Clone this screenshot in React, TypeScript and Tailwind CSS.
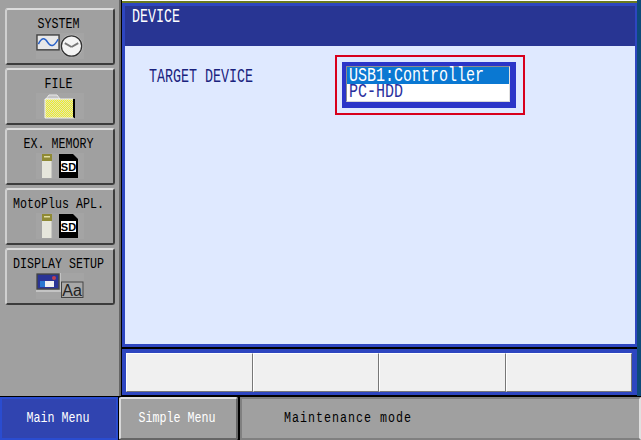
import React from "react";

const mono = "font-['Liberation_Mono',monospace]";

const bevel =
  "border-2 border-t-[#dcdcdc] border-l-[#d0d0d0] border-r-[#3c3c3c] border-b-[#3c3c3c] rounded-[3px]";

function SystemIcon() {
  return (
    <svg width="50" height="26" viewBox="0 0 50 26">
      <rect x="1" y="1.5" width="23" height="15.5" fill="#e8e8e8" stroke="#444" strokeWidth="1.5" />
      <path d="M2.5 11 C6 4 9 4 12 9 S19 14 23 6" fill="none" stroke="#2a62c8" strokeWidth="1.6" />
      <circle cx="37" cy="13" r="11.8" fill="#d0d0d0" />
      <circle cx="37" cy="13" r="10.6" fill="#f4f4f4" stroke="#333" strokeWidth="1.4" />
      <path d="M37 14 L30 10 M37 14 L44 10" stroke="#777" strokeWidth="2" />
    </svg>
  );
}

function FolderIcon() {
  return (
    <svg width="32" height="25" viewBox="0 0 32 25">
      <defs>
        <pattern id="dither" width="2" height="2" patternUnits="userSpaceOnUse">
          <rect width="2" height="2" fill="#f2f220" />
          <rect width="1" height="1" fill="#e0e0c0" />
          <rect x="1" y="1" width="1" height="1" fill="#e0e0c0" />
        </pattern>
      </defs>
      <path d="M2 5 L5 1 H13 L16 5 Z" fill="#c4c4c4" stroke="#e8e8e8" strokeWidth="1" />
      <rect x="1" y="5" width="28" height="19" fill="url(#dither)" />
      <path d="M1 24 V5 H29" fill="none" stroke="#f4f4f4" strokeWidth="1" />
      <path d="M30 5 V24" stroke="#000" strokeWidth="2" />
      <path d="M1 24 H30" stroke="#eee" strokeWidth="1" />
    </svg>
  );
}

function MemoryIcon() {
  return (
    <svg width="36" height="24" viewBox="0 0 36 24">
      <rect x="0" y="0" width="10" height="7" fill="#8f8a35" />
      <rect x="2" y="2" width="6" height="1.5" fill="#e0dca0" />
      <rect x="0" y="7" width="10" height="17" fill="#e6e6dc" />
      <path d="M10 7 V24" stroke="#aaa" strokeWidth="1" />
      <path d="M17 0 H31 L36 5 V24 H17 Z" fill="#000" />
      <rect x="19" y="7" width="15" height="11" fill="#fff" />
      <text x="26.5" y="16.5" textAnchor="middle" fontSize="11" fontWeight="700" fontFamily="Liberation Sans, sans-serif" fill="#000">SD</text>
    </svg>
  );
}

function DisplayIcon() {
  return (
    <svg width="48" height="26" viewBox="0 0 48 26">
      <rect x="0" y="0" width="25" height="19" fill="#c4c4c4" />
      <rect x="1" y="1" width="22" height="15" fill="#2a3496" stroke="#444" strokeWidth="1.5" />
      <rect x="4" y="8" width="14" height="6" fill="#f0f0f0" />
      <rect x="4" y="8" width="5" height="6" fill="#2a78d0" />
      <circle cx="18" cy="5" r="2" fill="#c04050" />
      <rect x="25.5" y="9" width="21.5" height="15.5" fill="#a8a8a8" stroke="#444" strokeWidth="1" />
      <text x="36" y="22.5" textAnchor="middle" fontSize="16" fontFamily="Liberation Sans, sans-serif" fill="#222">Aa</text>
    </svg>
  );
}

function Tall({ children, className = "" }: { children: React.ReactNode; className?: string }) {
  return <span className={`inline-block whitespace-pre ${className}`}>{children}</span>;
}

function MenuButton({ label, children }: { label: string; children: React.ReactNode }) {
  return (
    <div className={`h-[57px] flex flex-col items-center ${bevel}`}>
      <span className="mt-[7px] pr-[3px] h-[15px] text-[11.67px] leading-[15px] text-black">
        <Tall className="scale-y-[1.3]">{label}</Tall>
      </span>
      <div className="mt-[1px] h-[26px] w-[48px] bg-[#a4a4a4] flex items-center justify-center">{children}</div>
    </div>
  );
}

export default function App() {
  return (
    <div className={`w-[641px] h-[440px] flex flex-col bg-black overflow-hidden ${mono}`}>
      <div className="h-[396px] flex shrink-0">
        {/* left menu */}
        <div className="w-[122px] shrink-0 flex bg-black pr-px">
          <div className="flex-1 bg-[#a0a0a0] border-r-2 border-[#666] pl-[5px] pr-[4px] pt-[8px] flex flex-col gap-[3px]">
            <MenuButton label="SYSTEM"><SystemIcon /></MenuButton>
            <MenuButton label="FILE"><FolderIcon /></MenuButton>
            <MenuButton label="EX. MEMORY"><MemoryIcon /></MenuButton>
            <MenuButton label="MotoPlus APL."><MemoryIcon /></MenuButton>
            <MenuButton label="DISPLAY SETUP"><DisplayIcon /></MenuButton>
          </div>
        </div>

        <div className="w-[515px] shrink-0 flex flex-col">
          <div className="h-[3px] bg-[#6b7a1e] border-t border-white" />

          {/* content panel */}
          <div className="h-[344px] border-[3px] border-r-2 border-[#2e46c0] flex flex-col bg-[#dfe9ff]">
            <div className="h-[40px] bg-[#283593] text-white text-[13.33px] leading-[24px] pl-[7px]">
              <Tall className="scale-y-[1.45]">DEVICE</Tall>
            </div>
            <div className="flex-1 flex items-start pt-[9px] pl-[24px]">
              <div className="w-[186px] pt-[13px] text-[13.33px] leading-[20px] text-[#1a237e]">
                <Tall className="scale-y-[1.45]">TARGET DEVICE</Tall>
              </div>
              <div className="w-[190px] h-[60px] border-2 border-[#d8001c] pl-[5px] pt-[5px]">
                <div className="w-[174px] h-[46px] bg-[#2b35c8] pl-[4px] pt-[4px]">
                  <div className="w-[164px] h-[36px] bg-white border border-[#8c8c8c] border-r-[#e0e0e0] border-b-[#d8d8d8] text-[15px] leading-[13px]">
                    <div className="bg-[#0a78d2] text-white h-[17px] pl-[2px] pt-[3px]">
                      <Tall className="scale-y-[1.3]">USB1:Controller</Tall>
                    </div>
                    <div className="text-[#2a2f9e] pl-[2px] pt-[2px]">
                      <Tall className="scale-y-[1.3]">PC-HDD</Tall>
                    </div>
                  </div>
                </div>
              </div>
            </div>
          </div>

          {/* function keys */}
          <div className="h-[46px] mt-[2px] bg-[#2e46c0] pl-[4px] pr-[5px] pt-[4px] pb-[3px] flex">
            {[0, 1, 2, 3].map((i) => (
              <div key={i} className="flex-1 bg-[#f0f0f0] border border-t-white border-l-white border-r-[#777] border-b-[#777]" />
            ))}
          </div>
        </div>

        <div className="flex-1 bg-[#0d4a7a]" />
      </div>

      {/* status row */}
      <div className="flex-1 flex pt-px">
        <div className="w-[118px] bg-[#3044b0] border-2 border-[#2a4cd0] text-white text-[11.67px] pr-[2px] flex items-center justify-center">
          <Tall className="scale-y-[1.3]">Main Menu</Tall>
        </div>
        <div className="w-[119px] ml-px bg-[#a0a0a0] border-2 border-t-[#e0e0e0] border-l-[#d8d8d8] border-r-[#666] border-b-[#666] rounded-[2px] text-white text-[11.67px] pr-[3px] flex items-center justify-center">
          <Tall className="scale-y-[1.3]">Simple Menu</Tall>
        </div>
        <div className="flex-1 ml-[2px] bg-[#a0a0a0] border-2 border-t-[#808080] border-l-[#808080] border-r-[#e0e0e0] border-b-[#808080] text-black text-[11.67px] tracking-[1px] flex items-center pl-[42px]">
          <Tall className="scale-y-[1.3]">Maintenance mode</Tall>
        </div>
      </div>
    </div>
  );
}
